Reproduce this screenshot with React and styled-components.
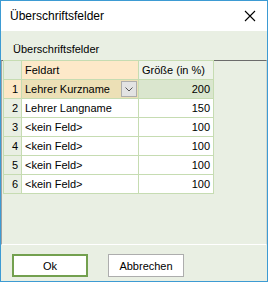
import styled, { createGlobalStyle } from "styled-components"

const Global = createGlobalStyle`
  html, body { margin: 0; padding: 0; background: #fff; }
  body { font-family: "Liberation Sans", Arial, sans-serif; }
`;

const Window = styled.div`
  width: 268px;
  height: 282px;
  box-sizing: border-box;
  border: 1px solid #3d9bd3;
  display: flex;
  flex-direction: column;
  background: #e9efe3;
`;

const TitleBar = styled.div`
  height: 30px;
  background: #fff;
  display: flex;
  align-items: center;
  justify-content: space-between;
  padding: 0 9px 1px 9px;
  box-sizing: border-box;
  font-size: 12px;
  color: #000;
`;

const Close = styled.svg`
  width: 12px;
  height: 12px;
  margin-right: 2px;
`;

const GroupLabel = styled.div`
  height: 29px;
  box-sizing: border-box;
  padding: 12px 0 0 12px;
  font-size: 11px;
  line-height: 13px;
  color: #000;
`;

const Panel = styled.div`
  height: 185px;
  box-sizing: border-box;
  border-top: 1px solid #6b6b6b;
  border-left: 1px solid #a0a0a0;
  border-right: 1px solid #d4d8cf;
  border-bottom: 1px solid #fff;
  padding: 0 0 0 1px;
`;

const Grid = styled.table`
  border-collapse: collapse;
  font-size: 11px;
  color: #000;
  table-layout: fixed;
  margin-top: -1px;
`;

const Cell = styled.td`
  border: 1px solid #c6dcb2;
  height: ${p => (p.$head ? "19px" : "19px")};
  padding: 0 3px;
  box-sizing: border-box;
  white-space: nowrap;
  text-align: ${p => (p.$right ? "right" : "left")};
  background: ${p => p.$bg || "#fff"};
  position: relative;
`;

const Combo = styled.span`
  position: absolute;
  right: 1px;
  top: 1px;
  width: 16px;
  height: 16px;
  box-sizing: border-box;
  border: 1px solid #adadad;
  background: #e3e3e3;
  display: flex;
  align-items: center;
  justify-content: center;
`;

const Buttons = styled.div`
  display: flex;
  gap: 20px;
  padding: 9px 0 0 11px;
`;

const Button = styled.button`
  width: 76px;
  height: 23px;
  box-sizing: border-box;
  background: #fff;
  border: ${p => (p.$primary ? "2px solid #73a04f" : "1px solid #adadad")};
  font-family: "Liberation Sans", Arial, sans-serif;
  font-size: 11px;
  color: #000;
  padding: 0;
`;

const rows = [
  ["Lehrer Kurzname", 200],
  ["Lehrer Langname", 150],
  ["<kein Feld>", 100],
  ["<kein Feld>", 100],
  ["<kein Feld>", 100],
  ["<kein Feld>", 100],
];

export default function App() {
  return (
    <>
      <Global />
      <Window>
        <TitleBar>
          <span>Überschriftsfelder</span>
          <Close viewBox="0 0 12 12">
            <path d="M1 1 L11 11 M11 1 L1 11" stroke="#000" strokeWidth="1.1" />
          </Close>
        </TitleBar>
        <GroupLabel>Überschriftsfelder</GroupLabel>
        <Panel>
          <Grid>
            <colgroup>
              <col style={{ width: 18 }} />
              <col style={{ width: 117 }} />
              <col style={{ width: 75 }} />
            </colgroup>
            <tbody>
              <tr>
                <Cell $head $bg="#e6ede0" />
                <Cell $head $bg="#fde9c9">Feldart</Cell>
                <Cell $head $bg="#eef3ea">Größe (in %)</Cell>
              </tr>
              {rows.map(([name, size], i) => (
                <tr key={i}>
                  <Cell $right $bg={i === 0 ? "#fde8c6" : "#e9efe3"}>{i + 1}</Cell>
                  <Cell $bg={i === 0 ? "#ece0b6" : "#fff"}>
                    {name}
                    {i === 0 && (
                      <Combo>
                        <svg width="8" height="5" viewBox="0 0 8 5">
                          <path d="M0.5 0.5 L4 4 L7.5 0.5" fill="none" stroke="#555" strokeWidth="1" />
                        </svg>
                      </Combo>
                    )}
                  </Cell>
                  <Cell $right $bg={i === 0 ? "#dae6ce" : "#fff"}>{size}</Cell>
                </tr>
              ))}
            </tbody>
          </Grid>
        </Panel>
        <Buttons>
          <Button $primary>Ok</Button>
          <Button>Abbrechen</Button>
        </Buttons>
      </Window>
    </>
  )
}
